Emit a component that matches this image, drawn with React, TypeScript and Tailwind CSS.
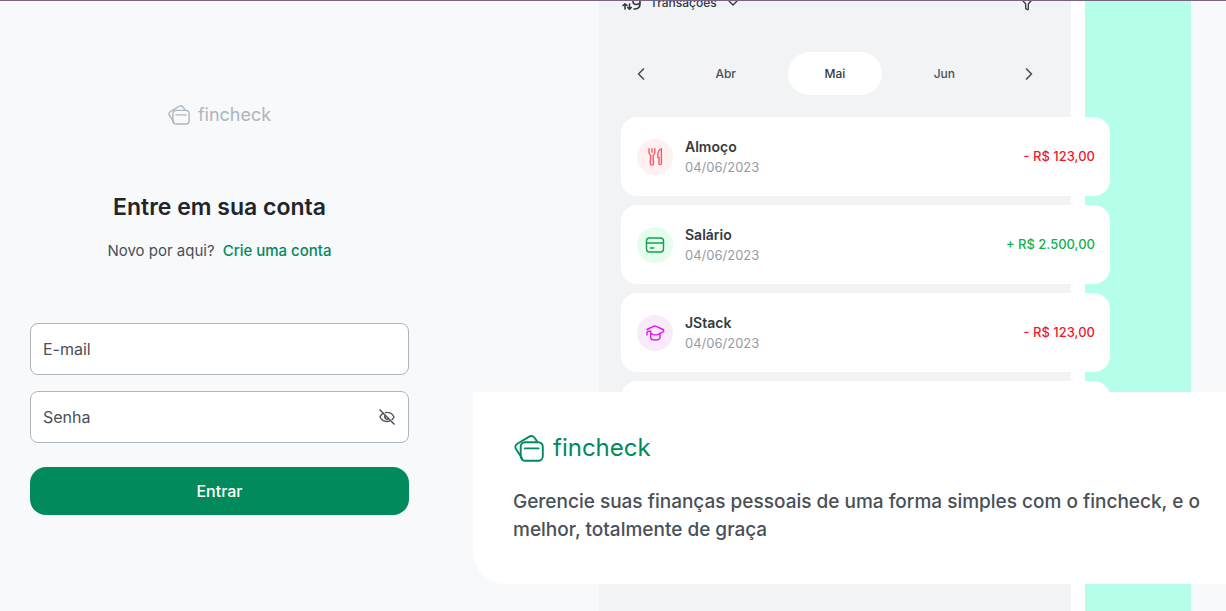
import React from "react";
import { ChevronDown, ChevronLeft, ChevronRight, Filter } from "lucide-react";

function LogoMark({ className }: { className: string }) {
  return (
    <svg viewBox="0 0 30 27" fill="none" stroke="currentColor" strokeWidth="1.9" strokeLinecap="round" strokeLinejoin="round" className={className} aria-hidden="true">
      <rect x="6.7" y="7.2" width="22.1" height="18.6" rx="4.5" />
      <path d="M10.8 13.4h13.8" />
      <path d="M8 23.2 2 14.1c-1.2-2-.7-4.2 1.3-5.3L15.3 1.6c1.700-1 3.700-.6 5 .9l2.500 3.400" />
    </svg>
  );
}

function EyeOff() {
  return (
    <svg viewBox="-1 -1 20 20" fill="none" stroke="currentColor" strokeWidth="1.4" className="size-5" aria-hidden="true">
      <path d="M5.400 5.200C4 6 2.800 7.300 2 9c1.500 3 4 4.500 7 4.500 1.100 0 2.100-.2 3-.6M7 4.600A8 8 0 0 1 9 4.400c3 0 5.500 1.600 7 4.600-.6 1.200-1.400 2.200-2.300 2.900" />
      <path d="M7.500 7.300a2.300 2.300 0 0 0 3.200 3.300" />
      <path d="m1.500 1.500 15 15" />
    </svg>
  );
}

const cards = [
  { kind: "food", name: "Almoço", value: "- R$ 123,00", tint: "bg-[#fff0f1] text-[#fa5a68]", tone: "text-[#f01830]" },
  { kind: "card", name: "Salário", value: "+ R$ 2.500,00", tint: "bg-[#e4fdec] text-[#12a150]", tone: "text-[#12b04e]" },
  { kind: "school", name: "JStack", value: "- R$ 123,00", tint: "bg-[#f9eafc] text-[#e018e6]", tone: "text-[#f01830]" },
];

function CategoryIcon({ kind }: { kind: string }) {
  return (
    <svg viewBox="0 0 20 20" fill="none" stroke="currentColor" strokeWidth="1.4" strokeLinecap="round" strokeLinejoin="round" className="size-5" aria-hidden="true">
      {kind === "food" && (
        <>
          <path d="M4 1.800v3.500c0 1.500.5 2.400 1.700 3l-.4 8.200a1.600 1.600 0 0 0 3.200 0l-.4-8.200c1.200-.6 1.700-1.500 1.700-3V1.800M6.900 1.800v3.500" />
          <path d="M16.200 1.800c-2 .8-3.400 3.500-3.400 6.500v2.200h1.300l-.3 5.800a1.300 1.300 0 0 0 2.600 0V1.800h-.2Z" />
        </>
      )}
      {kind === "card" && (
        <>
          <rect x="1.500" y="3" width="17" height="14" rx="3" />
          <path d="M1.500 8h17M5.500 13h3.300" />
        </>
      )}
      {kind === "school" && (
        <>
          <path d="m2 6.500 6.500-3.200a3 3 0 0 1 2.700 0L18 6.500c1 .5.900 1.900 0 2.400L13 11.300a6 6 0 0 1-5 0L5.500 10" />
          <path d="M2 12V9.800c0-1 .5-1.600 1.500-1.600H6M5.700 10v4.500c0 1.600 2.300 2.500 4.800 2.500s4.500-.9 4.500-2.500v-4" />
        </>
      )}
    </svg>
  );
}

export default function App() {
  return (
    <div className="flex h-screen overflow-hidden border-t border-[#766482] bg-[#f8f9fb] font-['Inter',sans-serif] text-[#495057]">
      <main className="flex min-w-[320px] flex-1 flex-col items-center px-[30px] pt-[102px]">
        <div className="flex items-center gap-2 text-[#adb5bd]">
          <LogoMark className="h-5 w-[22px]" />
          <span className="text-lg leading-6">fincheck</span>
        </div>
        <h1 className="mt-16 text-[23px] leading-8 font-semibold text-[#212529]">Entre em sua conta</h1>
        <p className="mt-4 flex gap-2 text-[15px] leading-6">
          Novo por aqui?
          <a href="#cadastro" className="font-medium text-[#018a5c]">Crie uma conta</a>
        </p>
        <form className="mt-15 flex w-full flex-col" onSubmit={(e) => e.preventDefault()}>
          <input aria-label="E-mail" type="email" placeholder="E-mail" className="h-13 w-full rounded-lg border border-[#adb5bd] bg-white px-3 pb-px text-base placeholder:text-[#495057]" />
          <div className="relative mt-4">
            <input aria-label="Senha" type="password" placeholder="Senha" className="h-13 w-full rounded-lg border border-[#adb5bd] bg-white px-3 pr-10 pb-px text-base placeholder:text-[#495057]" />
            <button type="button" aria-label="Mostrar senha" className="absolute inset-y-0 right-3 flex items-center">
              <EyeOff />
            </button>
          </div>
          <button type="submit" className="mt-6 h-12 rounded-2xl bg-[#018a5c] text-base font-medium text-white">Entrar</button>
        </form>
      </main>

      <section className="relative w-[787px] shrink-0 overflow-hidden pl-[160px]">
        <div className="flex h-full">
          <div className="w-[472px] bg-[#f1f3f5]">
            <div className="h-[116px] overflow-hidden pr-9 pl-[23px]">
              <div className="-mt-2 flex h-5 items-center text-xs font-medium text-[#343a40]">
                <svg viewBox="0 0 20 20" fill="none" stroke="currentColor" strokeWidth="1.6" strokeLinecap="round" strokeLinejoin="round" className="size-5" aria-hidden="true">
                  <path d="M3 16v-5M1 12.500 3 10.800l2 1.700M7.500 11v5M5.700 14.500l1.800 1.700 1.800-1.700M11 7v1.500c0 2 1.500 3 3.300 3S18 10.500 18 8.500V6v5c0 3-2 5-6 5" />
                </svg>
                <span className="ml-2">Transações</span>
                <ChevronDown className="ml-2 size-4" />
                <Filter className="ml-auto size-4" />
              </div>
              <div className="-mr-1 mt-[39px] ml-[9px] flex h-[43px] items-center text-xs font-medium">
                <ChevronLeft className="size-5" />
                <div className="grid flex-1 grid-cols-3 items-center px-5 text-center leading-5">
                  <span>Abr</span>
                  <span className="mx-2 flex h-[43px] items-center justify-center rounded-full bg-white text-[#343a40]">Mai</span>
                  <span>Jun</span>
                </div>
                <ChevronRight className="size-5" />
              </div>
            </div>
            <div className="flex w-[511px] flex-col gap-[9px] pl-[22px]">
              {cards.map((c) => (
                <article key={c.name} className="relative flex h-[79px] items-center rounded-2xl bg-white pr-[15px] pl-4">
                  <span className={"flex size-9 items-center justify-center rounded-full " + c.tint}>
                    <CategoryIcon kind={c.kind} />
                  </span>
                  <div className="ml-3">
                    <h2 className="text-sm leading-5 font-semibold text-[#343a40]">{c.name}</h2>
                    <p className="text-[13px] leading-5 text-[#969ca3]">04/06/2023</p>
                  </div>
                  <strong className={"ml-auto text-[13px] font-medium " + c.tone}>{c.value}</strong>
                </article>
              ))}
              <div className="relative h-[79px] rounded-2xl bg-white" />
            </div>
          </div>
          <div className="w-[14px] bg-white" />
          <div className="w-[106px] bg-[#b4feea]" />
        </div>
        <div className="absolute right-0 bottom-[27px] left-[34px] rounded-bl-[32px] bg-white py-10 pl-10">
          <div className="flex items-center gap-2 text-[#018a5c]">
            <LogoMark className="h-[27px] w-8" />
            <span className="text-2xl leading-8">fincheck</span>
          </div>
          <p className="mt-6 text-[19px] leading-7 font-medium">Gerencie suas finanças pessoais de uma forma simples com o fincheck, e o melhor, totalmente de graça</p>
        </div>
      </section>
    </div>
  );
}
